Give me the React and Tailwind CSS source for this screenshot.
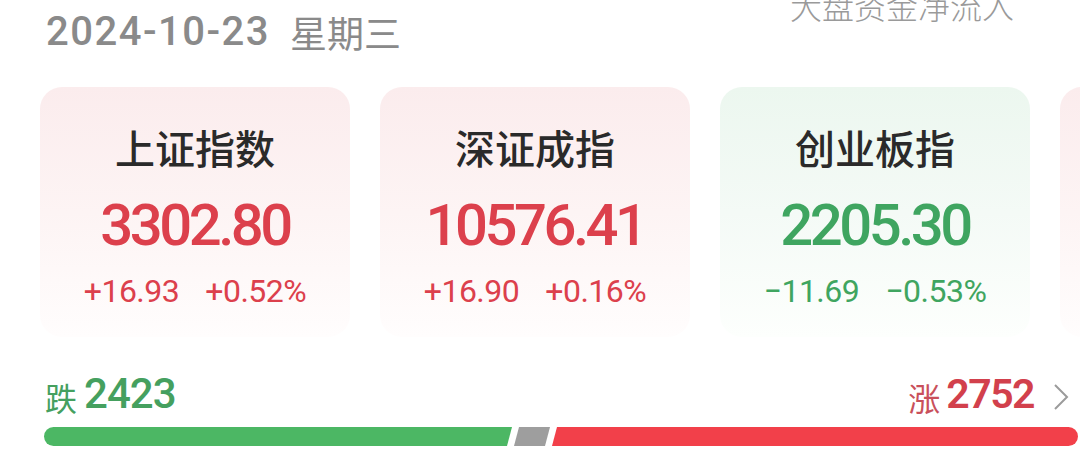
import React from 'react';

const indices = [
  { name: '上证指数', value: '3302.80', change: '+16.93', pct: '+0.52%', up: true },
  { name: '深证成指', value: '10576.41', change: '+16.90', pct: '+0.16%', up: true },
  { name: '创业板指', value: '2205.30', change: '\u221211.69', pct: '\u22120.53%', up: false },
];

const IndexCard = ({ item }) => {
  const color = item.up ? 'text-[#dc404c]' : 'text-[#3fa560]';
  return (
    <div
      className={`flex flex-col items-center shrink-0 w-[310px] h-[250px] rounded-[22px] pt-[40px] ${
        item.up
          ? 'bg-gradient-to-b from-[#fbeced] via-[#fdf4f4] to-[#fffdfd]'
          : 'bg-gradient-to-b from-[#ecf7ef] via-[#f4faf6] to-[#fdfffd]'
      }`}
    >
      <div className="h-[40px] text-[40px] leading-none font-medium text-[#2a2a2a] font-['Noto_Sans_CJK_SC',sans-serif]">
        {item.name}
      </div>
      <div className={`mt-[29px] h-[58px] text-[58px] leading-none font-medium tracking-[-3.5px] ${color}`}>
        {item.value}
      </div>
      <div className={`mt-[21px] h-[32px] flex gap-[26px] text-[32px] leading-none tracking-[-0.5px] ${color}`}>
        <span>{item.change}</span>
        <span>{item.pct}</span>
      </div>
    </div>
  );
};

export default function App() {
  return (
    <div className="w-[1080px] h-[471px] overflow-hidden bg-white font-['Roboto','Noto_Sans_CJK_SC',sans-serif]">
      {/* header */}
      <div className="flex justify-between items-start h-[87px]">
        <div className="ml-[46px] mt-[12px] flex items-center gap-[20px] text-[#8a8a8a]">
          <span className="text-[40px] leading-none font-medium tracking-[1.5px]">2024-10-23</span>
          <span className="text-[37px] leading-none font-['Noto_Sans_CJK_SC',sans-serif]">星期三</span>
        </div>
        <div className="mr-[66px] -mt-[11px] text-[32px] leading-none font-light text-[#9a9a9a] font-['Noto_Sans_CJK_SC',sans-serif]">
          大盘资金净流入
        </div>
      </div>

      {/* index cards */}
      <div className="flex gap-[30px] pl-[40px]">
        {indices.map((item) => (
          <IndexCard key={item.name} item={item} />
        ))}
        <div className="shrink-0 w-[310px] h-[250px] rounded-[22px] bg-gradient-to-b from-[#fbeced] via-[#fdf4f4] to-[#fffdfd]" />
      </div>

      {/* rise / fall */}
      <div className="flex justify-between items-end mt-[42px] pl-[45px] pr-[10px] h-[34px]">
        <div className="flex items-end gap-[7px] text-[#45a05f]">
          <span className="text-[32px] leading-none font-['Noto_Sans_CJK_SC',sans-serif]">跌</span>
          <span className="text-[42px] leading-none font-medium tracking-[-1px] -mb-[2px]">2423</span>
        </div>
        <div className="flex items-end">
          <span className="text-[32px] leading-none text-[#c9505b] font-['Noto_Sans_CJK_SC',sans-serif]">涨</span>
          <span className="ml-[6px] text-[41px] leading-none font-semibold tracking-[-1.5px] text-[#d2404c] -mb-[2px]">2752</span>
          <svg className="ml-[18px] mb-[1px]" width="18" height="30" viewBox="0 0 18 30">
            <polyline points="3,3 15,15 3,27" fill="none" stroke="#9b9b9b" strokeWidth="2" />
          </svg>
        </div>
      </div>

      {/* bar */}
      <div className="flex gap-[2px] mt-[14px] ml-[44px] mr-[2px] h-[19px]">
        <div className="w-[468px] bg-[#4cb764] rounded-l-full [clip-path:polygon(0_0,100%_0,calc(100%-5px)_100%,0_100%)]" />
        <div className="w-[36px] bg-[#9e9e9e] [clip-path:polygon(5px_0,100%_0,calc(100%-5px)_100%,0_100%)]" />
        <div className="flex-1 bg-[#f2404a] rounded-r-full [clip-path:polygon(5px_0,100%_0,100%_100%,0_100%)]" />
      </div>
    </div>
  );
}
